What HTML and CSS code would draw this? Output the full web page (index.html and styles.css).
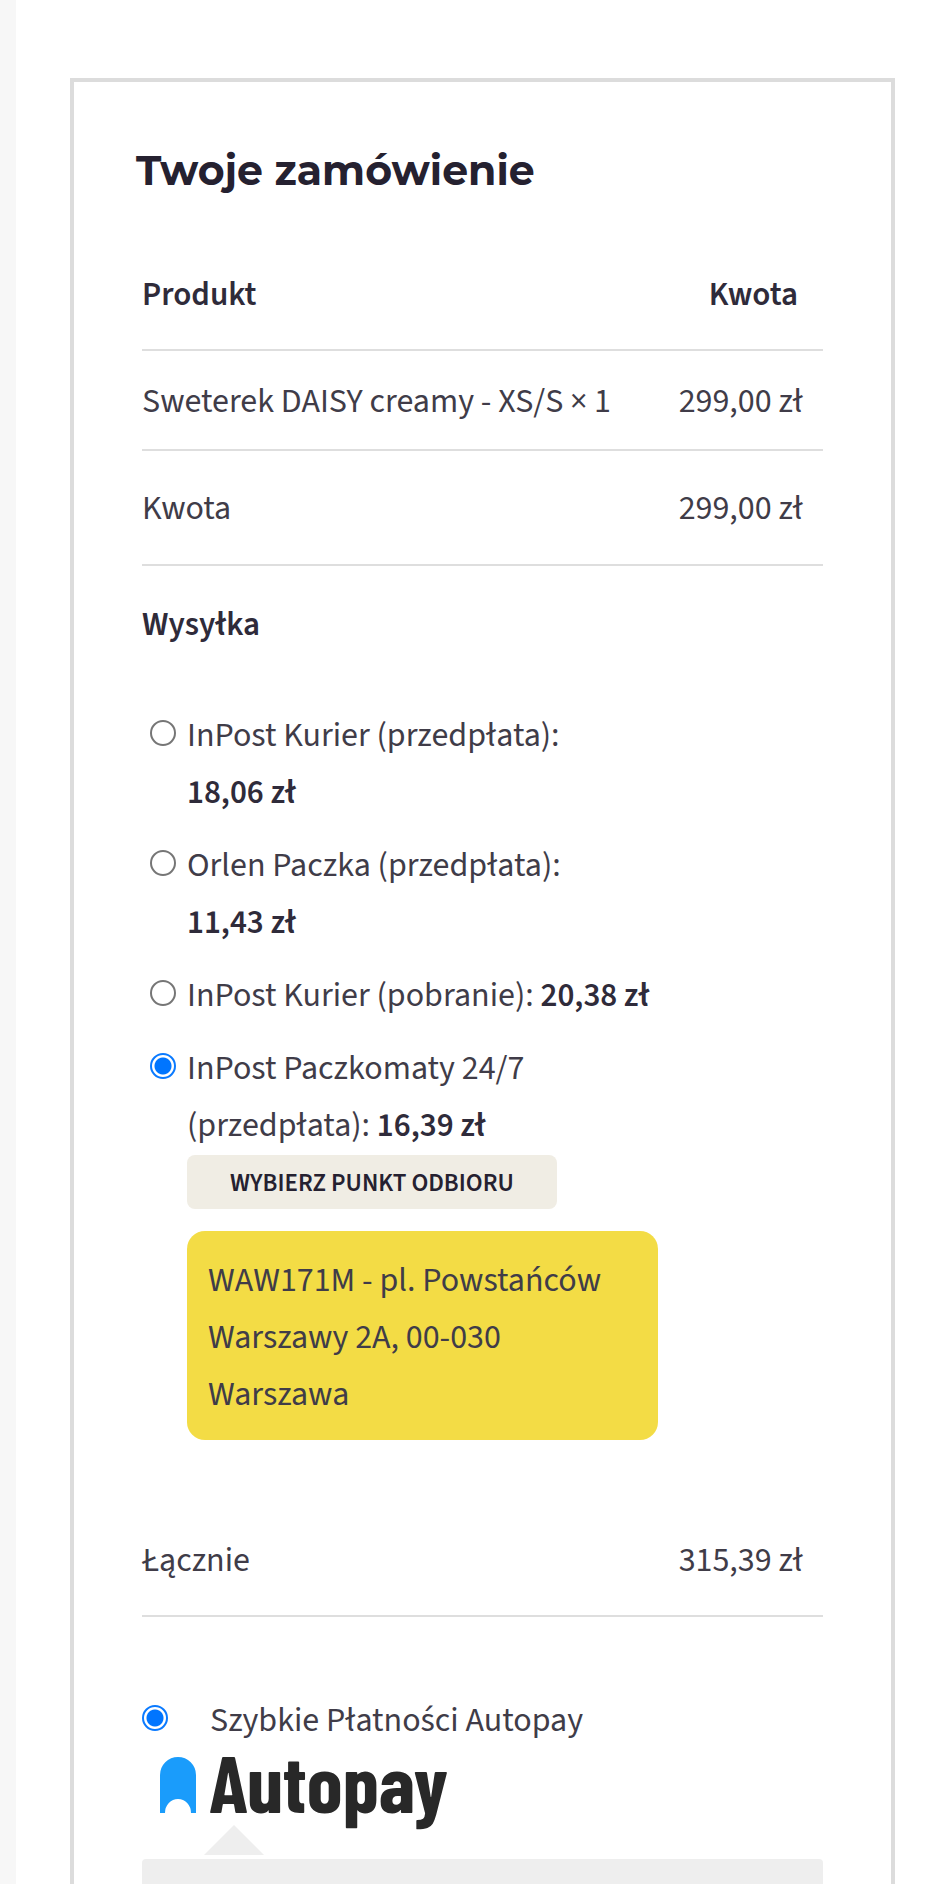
FILE: index.html
```html
<!DOCTYPE html>
<html lang="pl">
<head>
<meta charset="utf-8">
<meta name="viewport" content="width=device-width, initial-scale=1">
<title>Twoje zamówienie</title>
<link rel="stylesheet" href="styles.css">
</head>
<body>
<main class="page">
  <form class="order">
    <h1 class="order-title">Twoje zamówienie</h1>
    <table class="summary">
      <thead>
        <tr class="row-head"><th scope="col">Produkt</th><th scope="col" class="amount">Kwota</th></tr>
      </thead>
      <tbody>
        <tr class="row-item"><td>Sweterek DAISY creamy - XS/S × 1</td><td class="amount">299,00 zł</td></tr>
        <tr class="row-subtotal"><td>Kwota</td><td class="amount">299,00 zł</td></tr>
        <tr class="row-shipping"><th colspan="2" scope="rowgroup">Wysyłka</th></tr>
        <tr class="row-methods">
          <td colspan="2">
            <ul class="methods">
              <li class="method">
                <input class="radio" type="radio" name="shipping" id="ship-courier">
                <label for="ship-courier">InPost Kurier (przedpłata): <b>18,06&nbsp;zł</b></label>
              </li>
              <li class="method">
                <input class="radio" type="radio" name="shipping" id="ship-orlen">
                <label for="ship-orlen">Orlen Paczka (przedpłata): <b>11,43&nbsp;zł</b></label>
              </li>
              <li class="method">
                <input class="radio" type="radio" name="shipping" id="ship-cod">
                <label for="ship-cod">InPost Kurier (pobranie): <b>20,38&nbsp;zł</b></label>
              </li>
              <li class="method">
                <input class="radio" type="radio" name="shipping" id="ship-locker" checked>
                <div class="method-body">
                  <label for="ship-locker">InPost Paczkomaty 24/7 (przedpłata): <b>16,39&nbsp;zł</b></label>
                  <button class="pick" type="button">WYBIERZ PUNKT ODBIORU</button>
                  <p class="point">WAW171M - pl. Powstańców Warszawy 2A, 00-030 Warszawa</p>
                </div>
              </li>
            </ul>
          </td>
        </tr>
      </tbody>
      <tfoot>
        <tr class="row-total"><td>Łącznie</td><td class="amount">315,39 zł</td></tr>
      </tfoot>
    </table>
    <section class="payment">
      <div class="payment-option">
        <input class="radio" type="radio" name="payment" id="pay-autopay" checked>
        <label for="pay-autopay">Szybkie Płatności Autopay</label>
      </div>
      <div class="brand">
        <svg class="brand-mark" viewBox="0 0 36 56" aria-hidden="true"><path d="M0 56V18a18 18 0 0 1 36 0v38h-5a13 14 0 0 0-26 0z"/></svg>
        <span class="brand-name">Autopay</span>
      </div>
      <svg class="payment-arrow" viewBox="0 0 60 30" aria-hidden="true"><path d="M30 0l30 30H0z"/></svg>
      <div class="payment-box"></div>
    </section>
  </form>
</main>
</body>
</html>
```
FILE: styles.css
```css
* { box-sizing: border-box; }

body {
  margin: 0;
  background: #f7f7f7;
  color: #403c48;
  font: 400 34px/57px "Source Sans 3", "Source Sans Pro", "Noto Sans CJK JP", "Noto Sans", sans-serif;
}

.page {
  margin-left: 16px;
  padding: 78px 50px 0 54px;
  height: 100vh;
  overflow: hidden;
  background: #fff;
}

.order {
  padding: 60px 61px;
  border: 4px solid #dcdcdc;
}

.order-title {
  margin: 0 0 39px;
  padding-left: 1px;
  color: #252130;
  font: 700 41px/56px Montserrat, Inter, sans-serif;
}

.summary {
  width: calc(100% - 14px);
  margin: 0 7px;
  border-collapse: separate;
  border-spacing: 0;
}

.summary th,
.summary td {
  padding: 2px 0 0;
  border-bottom: 2px solid #dedede;
  text-align: left;
}

.summary th,
b {
  color: #2f2b3a;
  font-size: 33px;
  font-weight: 600;
}

.summary .amount {
  padding-right: 20px;
  text-align: right;
}

.summary th.amount { padding-right: 25px; }

.row-head th { height: 114px; }
.row-item td { height: 100px; }
.row-subtotal td { height: 115px; }
.row-total td { height: 113px; }

.summary .row-shipping th {
  height: 114px;
  border: 0;
}

.summary .row-methods td {
  padding: 27px 0 64px 8px;
  border: 0;
}

.methods {
  display: grid;
  gap: 16px;
  max-width: 508px;
  margin: 0;
  padding: 0;
  list-style: none;
}

.method {
  display: flex;
  gap: 11px;
}

.method label { flex: 1; }

.method-body {
  display: flex;
  flex: 1;
  flex-direction: column;
  align-items: flex-start;
}

.radio {
  appearance: none;
  flex: none;
  width: 26px;
  height: 26px;
  margin: 13px 0 0;
  border: 2px solid #767676;
  border-radius: 50%;
  background: #fff;
}

.radio:checked {
  border-color: #0a7aff;
  background: radial-gradient(circle, #0075ff 8px, #fff 9px);
}

.method-body label { flex: none; }

.pick {
  height: 54px;
  margin: 1px 0 22px;
  padding: 2px 43px 0;
  border: 0;
  border-radius: 8px;
  background: #f0ede4;
  color: #252130;
  font: inherit;
  font-size: 25px;
  font-weight: 600;
  line-height: 52px;
}

.point {
  width: 100%;
  margin: 0;
  padding: 21px 21px 17px;
  border-radius: 18px;
  background: #f3dc45;
}

.payment {
  margin: 75px 7px 0;
}

.payment-option {
  display: flex;
  gap: 42px;
}

.brand {
  display: flex;
  gap: 13px;
  height: 76px;
  padding: 8px 0 0 18px;
}

.brand-mark {
  width: 36px;
  height: 56px;
  fill: #1a9cfb;
}

.brand-name {
  color: #282828;
  font: 700 81px/47px "Barlow Condensed", "Roboto Condensed", sans-serif;
}

.payment-arrow {
  display: block;
  width: 60px;
  height: 30px;
  margin: 0 0 4px 62px;
  fill: #eee;
}

.payment-box {
  height: 200px;
  border-radius: 4px;
  background: #eee;
}
```
